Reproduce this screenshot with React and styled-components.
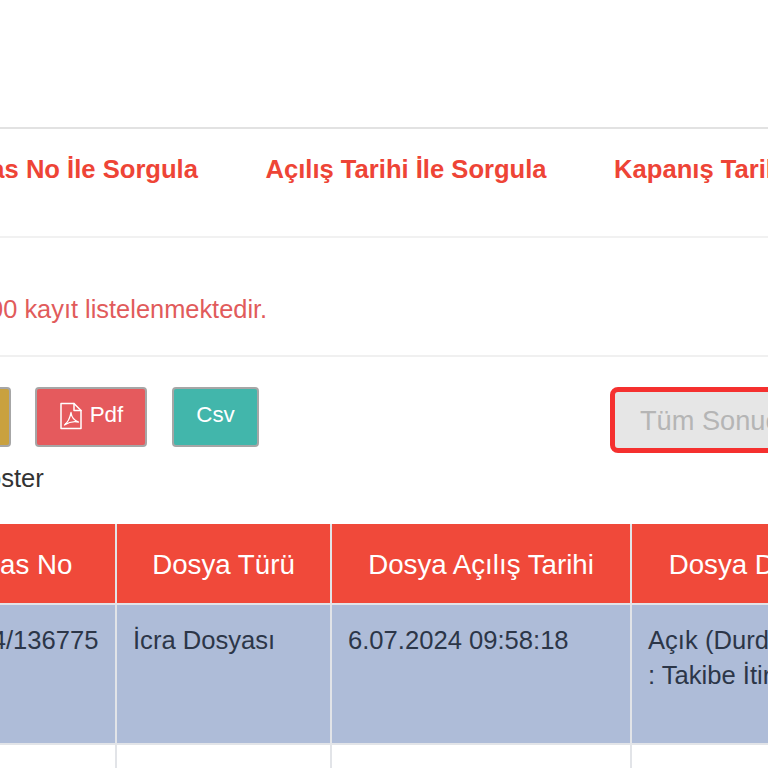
import React from "react";
import styled, { createGlobalStyle } from "styled-components";

const Global = createGlobalStyle`
  html, body { margin: 0; padding: 0; background: #fff; }
  body { font-family: "Liberation Sans", Arial, sans-serif; color: #333; }
`;

const Viewport = styled.div`
  width: 768px;
  height: 768px;
  overflow: hidden;
`;

const Scroller = styled.div`
  width: 1700px;
  margin-left: -300px;
`;

const Tabs = styled.nav`
  margin-top: 127px;
  height: 111px;
  box-sizing: border-box;
  border-top: 2px solid #e2e2e2;
  border-bottom: 2px solid #f1f1f1;
  display: flex;
  align-items: center;
  gap: 67.5px;
  padding-left: 259px;
`;

const Tab = styled.a`
  font-size: 25.6px;
  font-weight: 700;
  color: #ee4436;
  white-space: nowrap;
  position: relative;
  top: -13px;
`;

const Notice = styled.p`
  margin: 0;
  height: 119px;
  box-sizing: border-box;
  border-bottom: 2px solid #f0f0f0;
  padding: 55px 0 0 275px;
  font-size: 25.4px;
  line-height: 32px;
  color: #e15b5b;
  white-space: nowrap;
`;

const Toolbar = styled.div`
  display: flex;
  align-items: flex-start;
  padding: 30px 0 0 199px;
  height: 98px;
  box-sizing: border-box;
`;

const Button = styled.button`
  height: 60px;
  width: ${(p) => p.$w}px;
  margin-right: ${(p) => p.$mr}px;
  box-sizing: border-box;
  background: ${(p) => p.$bg};
  border: 2px solid #a6a6a6;
  border-radius: 4px;
  color: #fff;
  font: 400 22.4px "Liberation Sans", Arial, sans-serif;
  display: flex;
  align-items: center;
  justify-content: center;
  gap: 7px;
  padding: 0 0 4px;
`;

const PdfIcon = styled.svg`
  width: 24px;
  height: 28px;
  fill: none;
  stroke: #fff;
  stroke-width: 1.5;
  stroke-linejoin: round;
  stroke-linecap: round;
  margin-top: 2px;
`;

const SearchInput = styled.input`
  width: 400px;
  height: 66px;
  box-sizing: border-box;
  background: #e6e6e6;
  border: 5px solid #f5302f;
  border-radius: 8px;
  padding: 2px 0 0 25px;
  font: 400 27.2px "Liberation Sans", Arial, sans-serif;
  outline: none;
  &::placeholder { color: #b5b5b5; opacity: 1; }
`;

const LengthLabel = styled.div`
  height: 69px;
  padding: 0 0 0 267px;
  font-size: 25.6px;
  line-height: 46px;
  color: #333;
`;

const Table = styled.table`
  margin-left: 231px;
  border-collapse: collapse;
  table-layout: fixed;
  width: 959px;
`;

const Th = styled.th`
  background: #f0493a;
  color: #fff;
  font-size: 27.7px;
  font-weight: 400;
  height: 80px;
  padding: 2px ${(p) => p.$pr || 0}px 0 0;
  border: 2px solid #e2e4e8;
  border-top: none;
  box-sizing: border-box;
  width: ${(p) => p.$w}px;
`;

const Td = styled.td`
  background: ${(p) => p.$bg || "#fff"};
  color: #2c3648;
  font-size: 25.6px;
  line-height: 35px;
  height: ${(p) => p.$h}px;
  vertical-align: top;
  padding: 18px 16px;
  border: 2px solid #e2e4e8;
  box-sizing: border-box;
  white-space: nowrap;
`;

export default function App() {
  return (
    <Viewport>
      <Global />
      <Scroller>
        <Tabs>
          <Tab>Esas No İle Sorgula</Tab>
          <Tab>Açılış Tarihi İle Sorgula</Tab>
          <Tab>Kapanış Tarihi İle Sorgula</Tab>
        </Tabs>
        <Notice>100 kayıt listelenmektedir.</Notice>
        <Toolbar>
          <Button $w={112} $bg="#c9a13f" $mr={24}>Excel</Button>
          <Button $w={112} $bg="#e55a5d" $mr={25}>
            <PdfIcon viewBox="0 0 24 28">
              <path d="M2 1.5H15L22 8.5V26.5H2Z" />
              <path d="M15 1.5V8.5H22" />
              <path d="M5.5 23C8.5 20.5 11 16 12 10.5C12.5 15 15.5 18.5 19.5 20C15 19 10 20 5.5 23Z" strokeWidth="1.3" />
            </PdfIcon>
            Pdf
          </Button>
          <Button $w={87} $bg="#42b6ab" $mr={351}>Csv</Button>
          <SearchInput placeholder="Tüm Sonuçlarda Ara" readOnly />
        </Toolbar>
        <LengthLabel>Göster</LengthLabel>
        <Table>
          <thead>
            <tr>
              <Th $w={184} $pr={8}>Esas No</Th>
              <Th $w={215}>Dosya Türü</Th>
              <Th $w={300}>Dosya Açılış Tarihi</Th>
              <Th $w={260}>Dosya Durumu</Th>
            </tr>
          </thead>
          <tbody>
            <tr>
              <Td $bg="#aebcd8" $h={140}>2024/136775</Td>
              <Td $bg="#aebcd8" $h={140}>İcra Dosyası</Td>
              <Td $bg="#aebcd8" $h={140}>6.07.2024 09:58:18</Td>
              <Td $bg="#aebcd8" $h={140}>Açık (Durdurulmuş)<br />: Takibe İtiraz</Td>
            </tr>
            <tr>
              <Td $h={140} />
              <Td $h={140} />
              <Td $h={140} />
              <Td $h={140} />
            </tr>
          </tbody>
        </Table>
      </Scroller>
    </Viewport>
  );
}
